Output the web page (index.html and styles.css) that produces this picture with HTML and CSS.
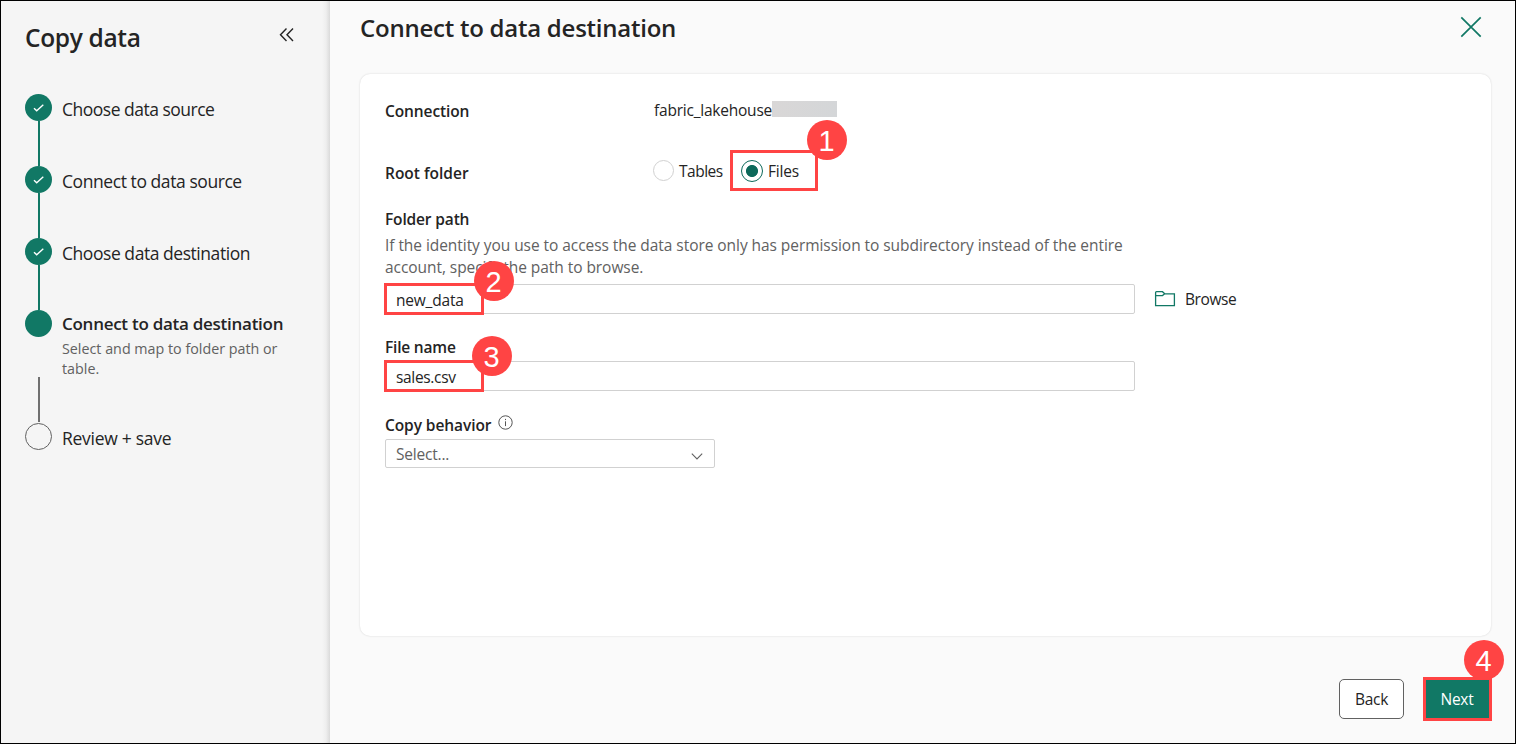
FILE: index.html
```html
<!DOCTYPE html>
<html lang="en">
<head>
<meta charset="utf-8">
<title>Copy data</title>
<link rel="stylesheet" href="styles.css">
</head>
<body>
<div class="app">
  <aside class="sidebar">
    <header class="side-head">
      <h1 class="side-title"><span class="t-copy">Copy data</span></h1>
      <svg class="collapse" width="16" height="16" viewBox="0 0 16 16"><path d="M7.5 1.5 1.5 7.7l6 6.2M14 1.5 8 7.7l6 6.2"/></svg>
    </header>
    <ol class="steps">
      <li class="step done"><span class="dot"><svg width="13" height="10" viewBox="0 0 13 10"><path d="M2 5.2 4.7 7.8 11.3 1.8"/></svg></span><span class="name t-s1">Choose data source</span></li>
      <li class="step done"><span class="dot"><svg width="13" height="10" viewBox="0 0 13 10"><path d="M2 5.2 4.7 7.8 11.3 1.8"/></svg></span><span class="name t-s2">Connect to data source</span></li>
      <li class="step done"><span class="dot"><svg width="13" height="10" viewBox="0 0 13 10"><path d="M2 5.2 4.7 7.8 11.3 1.8"/></svg></span><span class="name t-s3">Choose data destination</span></li>
      <li class="step current"><span class="dot"></span><div class="info"><span class="name t-s4">Connect to data destination</span><p class="hint">Select and map to folder path or<br>table.</p></div></li>
      <li class="step todo"><span class="dot"></span><span class="name t-s5">Review + save</span></li>
    </ol>
  </aside>
  <main class="main">
    <header class="main-head">
      <h2 class="main-title"><span class="t-main">Connect to data destination</span></h2>
      <svg class="close" width="22" height="22" viewBox="0 0 22 22"><path d="M1.3 1.3 20.7 20.7M20.7 1.3 1.3 20.7"/></svg>
    </header>
    <section class="card">
      <div class="row connection">
        <span class="label t-conn">Connection</span>
        <span class="value t-fab">fabric_lakehouse</span><span class="redacted"></span>
      </div>
      <div class="row root">
        <span class="label t-root">Root folder</span>
        <label class="option"><span class="radio"></span><span class="t-tab">Tables</span></label>
        <label class="option files"><span class="radio checked"></span><span class="t-files">Files</span><span class="mark mark-files"><b class="badge">1</b></span></label>
      </div>
      <div class="label t-fp">Folder path</div>
      <p class="help"><span class="t-h1">If the identity you use to access the data store only has permission to subdirectory instead of the entire</span><br><span class="t-h2">account, specify the path to browse.</span></p>
      <div class="line">
        <div class="input"><span class="t-new">new_data</span><span class="mark mark-folder"><b class="badge">2</b></span></div>
        <div class="browse"><svg width="22" height="18" viewBox="0 0 22 18"><path d="M1.6 2.6q0-.9.9-.9h6l2.2 2.1h9.7v11.9H1.6zM1.6 5.6h6.9l2.2-1.8"/></svg><span class="t-br">Browse</span></div>
      </div>
      <div class="label file-label t-fn">File name</div>
      <div class="input"><span class="t-csv">sales.csv</span><span class="mark mark-name"><b class="badge">3</b></span></div>
      <div class="label copy-label"><span class="t-cb">Copy behavior</span><svg width="15" height="15" viewBox="0 0 15 15"><circle cx="7.5" cy="7.5" r="6.7"/><path d="M7.5 6.3v4.8M7.5 3.9v1.2"/></svg></div>
      <div class="select"><span class="t-sel">Select...</span><svg width="14" height="9" viewBox="0 0 14 9"><path d="M1.8 1.7 7 6.9l5.2-5.2"/></svg></div>
    </section>
    <footer class="actions">
      <div class="btn back"><span class="t-back">Back</span></div>
      <div class="btn next"><span class="t-next">Next</span><b class="badge">4</b></div>
    </footer>
  </main>
</div>
</body>
</html>
```
FILE: styles.css
```css
* { box-sizing: border-box; margin: 0; padding: 0; }
body { font: 15.5px/22px "Open Sans", "Noto Sans", sans-serif; color: #242424; }
svg { fill: none; stroke: currentColor; flex: none; display: block; }
span { white-space: nowrap; }
.app { display: flex; width: 1516px; height: 744px; border: 1px solid #000; background: #fafafa; overflow: hidden; }

.sidebar { width: 329px; flex: none; padding: 17px 35px 0 24px; background: linear-gradient(to right, #f5f5f5 321px, #eeeeee 325px, #dadada 329px); }
.side-head { display: flex; justify-content: space-between; height: 76px; }
.side-title { font-size: 24.5px; line-height: 40px; font-weight: 600; }
.collapse { margin-top: 9px; stroke-width: 1.4; }
.steps { list-style: none; }
.step { display: flex; align-items: flex-start; gap: 10px; height: 72px; position: relative; font-size: 17.5px; line-height: 24px; }
.step .name { margin-top: 3px; }
.dot { width: 27px; height: 27px; border-radius: 50%; background: #117865; color: #fff; display: flex; align-items: center; justify-content: center; flex: none; }
.dot svg { stroke-width: 1.4; }
.done::after { content: ""; position: absolute; left: 13px; top: 27px; width: 2px; height: 45px; background: #117865; }
.current { height: 113px; }
.current::after { content: ""; position: absolute; left: 13px; top: 67px; width: 2px; height: 45px; background: #707070; }
.step.current .name { display: block; margin-top: 2px; font-weight: 600; font-size: 17px; }
.hint { font-size: 14.3px; line-height: 20px; color: #616161; margin-top: 3px; white-space: nowrap; }
.todo .dot { background: transparent; border: 1px solid #616161; }

.main { flex: 1; padding: 0 23px 0 30px; }
.main-head { display: flex; justify-content: space-between; height: 73px; padding: 11px 10px 0 0; }
.main-title { font-size: 24px; line-height: 32px; font-weight: 600; }
.close { color: #117865; margin-top: 4px; stroke-width: 1.7; }
.card { width: 1131px; height: 562px; background: #fff; border-radius: 10px; box-shadow: 0 0 2px rgba(0,0,0,.16); padding: 26px 25px 0 25px; }
.label { font-weight: 600; font-size: 15.5px; }
.row { display: flex; align-items: center; }
.row .label { width: 268px; flex: none; }
.connection { height: 22px; }
.value { margin: -2px 0 0 1px; }
.redacted { width: 65px; height: 16px; margin-top: -4px; background: linear-gradient(to right, #d9d7d7, #d4d6d8); }
.root { height: 40px; margin: 30px 0 16px; }
.root .label { padding-top: 1px; }
.option { display: flex; align-items: center; gap: 5px; position: relative; width: 88px; height: 38px; margin-top: -3px; }
.radio { width: 21px; height: 21px; border: 1px solid #d1d1d1; border-radius: 50%; flex: none; }
.radio.checked { width: 22px; height: 22px; border-color: #0c695a; background: radial-gradient(circle, #0c695a 5.6px, transparent 6.4px); }
.mark { position: absolute; border: 3px solid #ff4444; }
.mark-files { left: -11px; top: -2px; width: 88px; height: 41px; }
.badge { position: absolute; width: 40px; height: 40px; border-radius: 50%; background: #ff4444; color: #fff; text-align: center; text-indent: -1px; font: 400 29px/42px "Liberation Sans", Arial, sans-serif; }
.mark-files .badge { right: -32px; top: -33px; }
.help { color: #616161; margin-top: 4px; }
.line { display: flex; align-items: center; gap: 19px; margin-top: 6px; }
.input { position: relative; width: 750px; height: 30px; line-height: 31px; border: 1px solid #d1d1d1; border-radius: 2px; padding-left: 10px; }
.mark-folder, .mark-name { left: -2px; top: -2px; width: 100px; height: 32px; }
.mark-folder .badge { left: 87px; top: -25px; }
.mark-name .badge { left: 85px; top: -27px; }
.browse { display: flex; align-items: center; gap: 9px; }
.browse svg { color: #117865; stroke-width: 1.3; }
.file-label { margin: 22px 0 3px; }
.copy-label { display: flex; gap: 7px; margin: 23px 0 3px; }
.copy-label svg { stroke-width: .9; color: #424242; margin-top: 1px; }
.select { display: flex; align-items: center; justify-content: space-between; width: 330px; height: 29px; border: 1px solid #d1d1d1; border-radius: 2px; padding: 0 10px; color: #616161; }
.select svg { margin-top: 6px; stroke-width: 1.1; }
.actions { display: flex; justify-content: flex-end; gap: 19px; margin-top: 41px; }
.btn { position: relative; display: flex; align-items: center; justify-content: center; }
.back { width: 65px; height: 40px; margin-top: 2px; border: 1px solid #616161; border-radius: 5px; background: #fff; }
.next { width: 69px; height: 44px; border: 3px solid #ff4444; background: #117865; color: #fff; padding-right: 1px; }
.next .badge { left: 38px; top: -40px; }

/* Tracking per text run */
.t-copy { letter-spacing: -.33px; }
.t-main { letter-spacing: -.24px; }
.t-s1 { letter-spacing: -.5px; }
.t-s2 { letter-spacing: -.43px; }
.t-s3 { letter-spacing: -.45px; }
.t-s4 { letter-spacing: -.27px; }
.t-s5 { letter-spacing: -.28px; }
.t-conn { letter-spacing: -.1px; }
.t-fab { letter-spacing: -.22px; }
.t-tab { letter-spacing: -.5px; }
.t-files { letter-spacing: -.2px; }
.t-fp { letter-spacing: -.15px; }
.t-h1, .t-h2 { letter-spacing: -.057px; }
.t-new { letter-spacing: -.2px; }
.t-csv { letter-spacing: -.33px; }
.t-br { letter-spacing: -.4px; }
.t-fn { letter-spacing: -.2px; }
.t-cb { letter-spacing: -.08px; }
.t-sel { letter-spacing: -.2px; }
.t-back, .t-next { letter-spacing: -.25px; }
```
